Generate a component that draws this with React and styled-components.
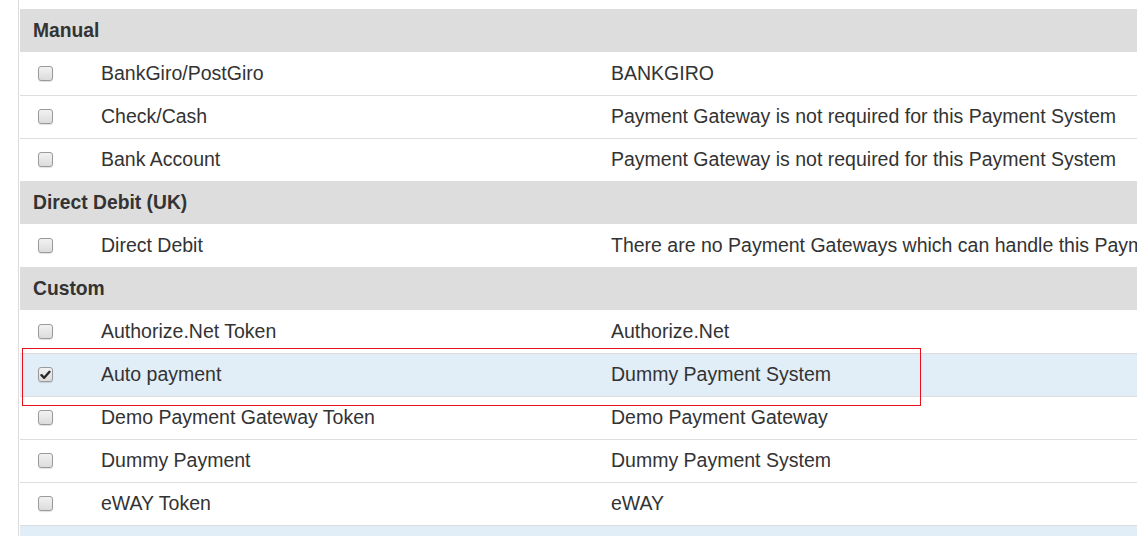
import React from "react";
import styled, { createGlobalStyle } from "styled-components";

const Global = createGlobalStyle`
  html, body { margin: 0; padding: 0; background: #fff; overflow: hidden; }
  body { font-family: "Liberation Sans", Arial, sans-serif; color: #333; }
`;

const Page = styled.div`
  margin-left: 18px;
  padding-top: 9px;
  border-left: 1px solid #dcdcdc;
  width: 1400px;
  min-height: 600px;
`;

const Table = styled.div`
  display: flex;
  flex-direction: column;
  margin-left: 1px;
`;

const GroupHeader = styled.div`
  height: 43px;
  box-sizing: border-box;
  background: #dddddd;
  display: flex;
  align-items: center;
  padding-left: 13px;
  font-weight: bold;
  font-size: 19.3px;
  color: #333;
`;

const Row = styled.div`
  display: grid;
  grid-template-columns: 81px 510px 1fr;
  align-items: center;
  height: 43px;
  box-sizing: border-box;
  border-top: ${(p) => (p.$first ? "none" : "1px solid #dddddd")};
  padding-bottom: ${(p) => (p.$first ? "0" : "1px")};
  background: ${(p) => (p.$selected ? "#e1eef8" : "#fff")};
  font-size: 19.5px;
  color: #333;
  white-space: nowrap;
`;

const CheckCell = styled.div`
  padding-left: 18px;
  display: flex;
  align-items: center;
`;

const Box = styled.span`
  width: 15px;
  height: 15px;
  box-sizing: border-box;
  border: 1px solid #9a9a9a;
  border-radius: 3px;
  background: linear-gradient(#f2f2f2, #dcdcdc);
  box-shadow: 0 1px 1px rgba(0, 0, 0, 0.12);
  display: flex;
  align-items: center;
  justify-content: center;
`;

const Cell = styled.div`
  overflow: visible;
`;

const Footer = styled.div`
  height: 30px;
  border-top: 1px solid #dddddd;
  background: #e1eef8;
`;

const Highlight = styled.div`
  position: absolute;
  left: 22px;
  top: 348px;
  width: 899px;
  height: 58px;
  box-sizing: border-box;
  border: 1px solid #e8101c;
  pointer-events: none;
`;

function Checkbox({ checked }) {
  return (
    <Box>
      {checked && (
        <svg width="11" height="10" viewBox="0 0 11 10">
          <path d="M1.5 5.2 L4.2 7.8 L9.5 1.8" fill="none" stroke="#2a2a2a" strokeWidth="2.4" strokeLinecap="round" strokeLinejoin="round" />
        </svg>
      )}
    </Box>
  );
}

const groups = [
  {
    title: "Manual",
    rows: [
      ["BankGiro/PostGiro", "BANKGIRO"],
      ["Check/Cash", "Payment Gateway is not required for this Payment System"],
      ["Bank Account", "Payment Gateway is not required for this Payment System"],
    ],
  },
  {
    title: "Direct Debit (UK)",
    rows: [["Direct Debit", "There are no Payment Gateways which can handle this Payment System"]],
  },
  {
    title: "Custom",
    rows: [
      ["Authorize.Net Token", "Authorize.Net"],
      ["Auto payment", "Dummy Payment System", true],
      ["Demo Payment Gateway Token", "Demo Payment Gateway"],
      ["Dummy Payment", "Dummy Payment System"],
      ["eWAY Token", "eWAY"],
    ],
  },
];

export default function App() {
  return (
    <>
      <Global />
      <Page>
        <Table>
          {groups.map((g) => (
            <React.Fragment key={g.title}>
              <GroupHeader>{g.title}</GroupHeader>
              {g.rows.map(([name, gw, sel], i) => (
                <Row key={name} $first={i === 0} $selected={sel}>
                  <CheckCell>
                    <Checkbox checked={sel} />
                  </CheckCell>
                  <Cell>{name}</Cell>
                  <Cell>{gw}</Cell>
                </Row>
              ))}
            </React.Fragment>
          ))}
          <Footer />
        </Table>
      </Page>
      <Highlight />
    </>
  );
}
